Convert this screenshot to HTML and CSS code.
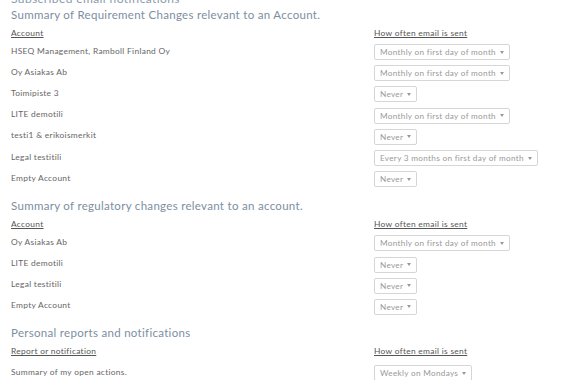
FILE: index.html
```html
<!DOCTYPE html>
<html>
<head>
<meta charset="utf-8">
<link rel="stylesheet" href="styles.css">
</head>
<body>
<div class="page">
  <h2 class="page-title">Subscribed email notifications</h2>

  <section class="block">
    <h3 class="block-title">Summary of Requirement Changes relevant to an Account.</h3>
    <table class="subs">
      <thead>
        <tr><th class="c1">Account</th><th class="c2">How often email is sent</th></tr>
      </thead>
      <tbody>
        <tr><td>HSEQ Management, Ramboll Finland Oy</td><td><span class="sel">Monthly on first day of month<i class="caret"></i></span></td></tr>
        <tr><td>Oy Asiakas Ab</td><td><span class="sel">Monthly on first day of month<i class="caret"></i></span></td></tr>
        <tr><td>Toimipiste 3</td><td><span class="sel">Never<i class="caret"></i></span></td></tr>
        <tr><td>LITE demotili</td><td><span class="sel">Monthly on first day of month<i class="caret"></i></span></td></tr>
        <tr><td>testi1 &amp; erikoismerkit</td><td><span class="sel">Never<i class="caret"></i></span></td></tr>
        <tr><td>Legal testitili</td><td><span class="sel">Every 3 months on first day of month<i class="caret"></i></span></td></tr>
        <tr><td>Empty Account</td><td><span class="sel">Never<i class="caret"></i></span></td></tr>
      </tbody>
    </table>
  </section>

  <section class="block">
    <h3 class="block-title">Summary of regulatory changes relevant to an account.</h3>
    <table class="subs">
      <thead>
        <tr><th class="c1">Account</th><th class="c2">How often email is sent</th></tr>
      </thead>
      <tbody>
        <tr><td>Oy Asiakas Ab</td><td><span class="sel">Monthly on first day of month<i class="caret"></i></span></td></tr>
        <tr><td>LITE demotili</td><td><span class="sel">Never<i class="caret"></i></span></td></tr>
        <tr><td>Legal testitili</td><td><span class="sel">Never<i class="caret"></i></span></td></tr>
        <tr><td>Empty Account</td><td><span class="sel">Never<i class="caret"></i></span></td></tr>
      </tbody>
    </table>
  </section>

  <section class="block block-last">
    <h3 class="block-title">Personal reports and notifications</h3>
    <table class="subs">
      <thead>
        <tr><th class="c1">Report or notification</th><th class="c2">How often email is sent</th></tr>
      </thead>
      <tbody>
        <tr class="last"><td>Summary of my open actions.</td><td><span class="sel">Weekly on Mondays<i class="caret"></i></span></td></tr>
      </tbody>
    </table>
  </section>
</div>
</body>
</html>
```

FILE: styles.css
```css
* { box-sizing: border-box; }
html, body { margin: 0; padding: 0; background: #fff; }
body {
  font-family: "Lato", "Noto Sans", sans-serif;
  font-weight: 400;
  color: #6a6a6a;
  overflow: hidden;
}
.page {
  padding: 0 0 0 11px;
  margin-top: -8px;
}
.page-title {
  margin: 0;
  font-size: 12px;
  font-weight: 400;
  letter-spacing: 0.4px;
  color: #8a9bab;
  line-height: 14px;
  height: 14px;
}
.block + .block { margin-top: 7px; }
.block + .block-last { margin-top: 6px; }
.block-title {
  margin: 0;
  padding: 0 0 2px 0;
  font-size: 11.5px;
  font-weight: 400;
  letter-spacing: 0.3px;
  color: #7d8e9f;
  line-height: 17px;
}
.subs {
  border-collapse: collapse;
  font-size: 8.4px;
  letter-spacing: 0.3px;
}
.subs th {
  font-weight: 400;
  text-align: left;
  text-decoration: underline;
  color: #555;
  padding: 2px 0 3px 0;
  height: 17px;
  vertical-align: middle;
}
.subs .c1 { width: 363px; }
.subs td {
  padding: 2px 0 3px 0;
  height: 21.2px;
  vertical-align: middle;
  color: #666;
}
.subs td:first-child { padding-bottom: 6px; }
.subs .last td { padding-top: 5px; }
.sel {
  display: inline-flex;
  align-items: center;
  height: 16px;
  padding: 0 5px 0 5px;
  border: 1px solid #d6d6d6;
  border-radius: 2px;
  color: #999;
  font-size: 8.2px;
  letter-spacing: 0.3px;
  white-space: nowrap;
}
.caret {
  display: inline-block;
  width: 0;
  height: 0;
  margin-left: 4px;
  border-left: 2px solid transparent;
  border-right: 2px solid transparent;
  border-top: 3px solid #999;
}
```
